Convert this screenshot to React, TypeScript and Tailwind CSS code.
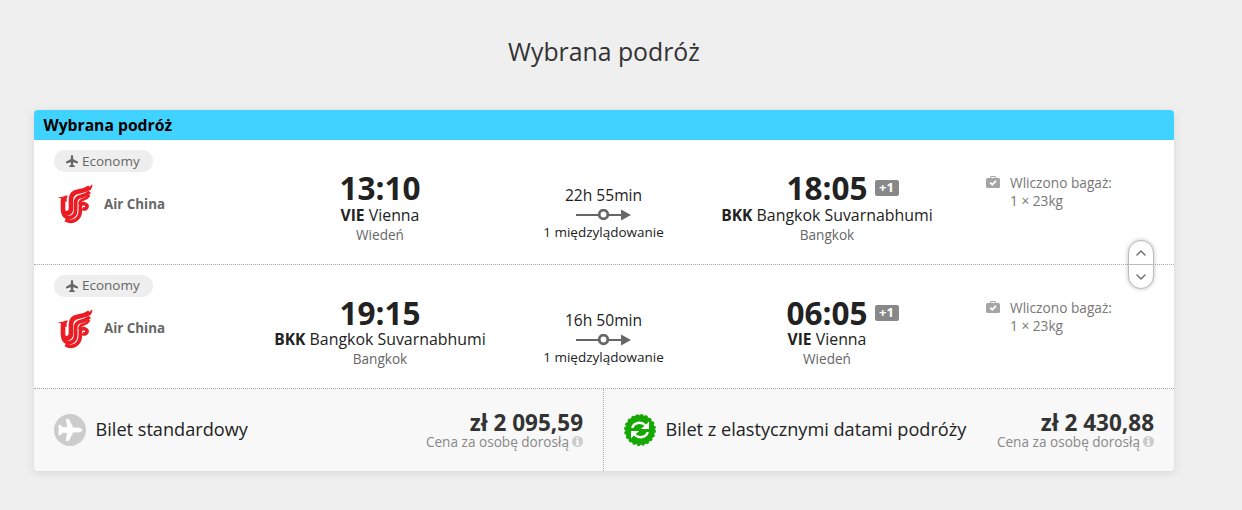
import { ChevronDown, ChevronUp } from 'lucide-react'

type Stop = { time: string; code: string; airport: string; city: string; nextDay?: boolean }

const legs: { from: Stop; to: Stop; duration: string }[] = [
  {
    from: { time: '13:10', code: 'VIE', airport: 'Vienna', city: 'Wiedeń' },
    to: { time: '18:05', code: 'BKK', airport: 'Bangkok Suvarnabhumi', city: 'Bangkok', nextDay: true },
    duration: '22h 55min',
  },
  {
    from: { time: '19:15', code: 'BKK', airport: 'Bangkok Suvarnabhumi', city: 'Bangkok' },
    to: { time: '06:05', code: 'VIE', airport: 'Vienna', city: 'Wiedeń', nextDay: true },
    duration: '16h 50min',
  },
]

const AirChinaLogo = () => (
  <svg viewBox="0 0 108 120" className="h-10 w-9" fill="none" stroke="#ec1c24">
    <path d="M2 42Q10 38 18 38Q26 34 33 35L29 42V54L12 48V43Z" fill="#ec1c24" stroke="none" />
    <path d="M18 47V76Q19 89 31 88Q42 86 42 73V45Q43 26 64 23Q84 20 98 10" strokeWidth="14" />
    <path d="M88 12Q100 9 106 1Q107 12 98 20Z" fill="#ec1c24" stroke="none" />
    <path d="M17 80Q20 102 37 101Q56 98 56 78V56Q56 40 72 37Q88 34 98 23" strokeWidth="11" />
    <path d="M25 107Q42 117 57 107Q70 98 70 79V68Q71 57 82 59Q93 62 89 71Q85 78 77 73" strokeWidth="11" />
    <path d="M67 62Q68 48 80 46Q91 43 97 33" strokeWidth="8" />
  </svg>
)

const PlaneUp = ({ className }: { className?: string }) => (
  <svg viewBox="0 0 12 12" className={className} fill="currentColor">
    <path d="M6 0C6.8 0 7.1.8 7.1 1.6V4L12 6.8V8.4L7.1 7.3V9.8L8.8 11V12H3.2V11L4.9 9.8V7.3L0 8.4V6.8L4.9 4V1.6C4.9.8 5.2 0 6 0Z" />
  </svg>
)

const RouteArrow = () => (
  <svg viewBox="0 0 56 12" className="h-3 w-14" fill="none" stroke="#666">
    <path d="M0 6H46" strokeWidth="2" />
    <path d="M45 .5L55 6L45 11.5Z" fill="#666" stroke="none" />
    <circle cx="27.5" cy="5.5" r="4.3" fill="#fff" strokeWidth="2.8" />
  </svg>
)

const Luggage = () => (
  <svg viewBox="0 0 14 12" className="mt-[2px] h-3 w-3.5" fill="none">
    <path d="M4.5 2.5V1Q4.5.5 5 .5H9Q9.5.5 9.5 1V2.5" stroke="#a5a5a5" />
    <rect y="2" width="14" height="10" rx="1.5" fill="#a5a5a5" />
    <path d="M4.2 6.6L6.3 8.7L10 4.8" stroke="#fff" strokeWidth="1.7" />
  </svg>
)

const StandardIcon = () => (
  <svg viewBox="0 0 32 32" className="size-8">
    <circle cx="16" cy="16" r="16" fill="#ccc" />
    <path
      d="M28 16C28 17.2 26 18 24 18H19L14.7 26.6H12.2L13.6 18.6H8.5L6.5 20.8H4.8L5.2 16L4.8 11.2H6.5L8.5 13.4H13.6L12.2 5.4H14.7L19 14H24C26 14 28 14.8 28 16Z"
      fill="#fff"
      stroke="#fff"
      strokeWidth=".8"
      strokeLinejoin="round"
    />
  </svg>
)

const FlexIcon = () => (
  <svg viewBox="0 0 32 32" className="size-8">
    <circle cx="16" cy="16" r="14.9" fill="#14a800" />
    <circle cx="16" cy="16" r="15.1" fill="none" stroke="#14a800" strokeWidth="1.6" strokeDasharray="2.74 2" />
    <path d="M8.2 13.8C10 8.4 17 7.2 21.5 11.4" fill="none" stroke="#fff" strokeWidth="2.5" />
    <path d="M25 7.6V14.9H16.8L19.7 12.6L22.4 10.3Z" fill="#fff" />
    <path d="M23.8 18.2C22 23.6 15 24.8 10.5 20.6" fill="none" stroke="#fff" strokeWidth="2.5" />
    <path d="M7 24.4V17.1H15.2L12.3 19.4L9.6 21.7Z" fill="#fff" />
  </svg>
)

const Info = () => (
  <svg viewBox="0 0 11 11" className="size-[11px]">
    <circle cx="5.5" cy="5.5" r="5.5" fill="#ccc" />
    <path d="M4.6 1.6H6.5V3.2H4.6ZM3.9 4.2H6.5V8H7.3V9.2H3.8V8H4.6V5.4H3.9Z" fill="#fff" />
  </svg>
)

const StopInfo = ({ stop }: { stop: Stop }) => (
  <div className="flex flex-col items-center pt-[31px] whitespace-nowrap text-[#222]">
    <div className="relative text-[31.5px] leading-[33.5px] font-bold">
      {stop.time}
      {stop.nextDay && (
        <span className="absolute top-[9px] left-full ml-[7px] h-4 w-6 rounded-[2px] bg-[#888] text-center text-[13px] leading-[15px] text-white">
          +1
        </span>
      )}
    </div>
    <div className="text-[15.9px] leading-5">
      <span className="text-[15.6px] font-bold">{stop.code}</span> {stop.airport}
    </div>
    <div className="text-[13.6px] leading-5 text-[#666]">{stop.city}</div>
  </div>
)

const Leg = ({ leg }: { leg: (typeof legs)[number] }) => (
  <div className="grid h-[124.5px] grid-cols-[234px_224px_223px_224px_1fr] border-b border-dotted border-[#aaa]">
    <div className="pt-2.5 pl-5 text-[#666]">
      <div className="flex h-[22px] w-[99px] items-center rounded-full bg-[#eee] pl-3 text-[13.5px]">
        <PlaneUp className="mr-1 size-3" />
        Economy
      </div>
      <div className="mt-3 flex items-center pl-[3px]">
        <AirChinaLogo />
        <span className="ml-[11px] text-[13.35px] font-bold">Air China</span>
      </div>
    </div>
    <StopInfo stop={leg.from} />
    <div className="flex flex-col items-center pt-[45px] text-[#222]">
      <div className="text-[15.6px] leading-5">{leg.duration}</div>
      <div className="mt-[4px]">
        <RouteArrow />
      </div>
      <div className="mt-[2px] text-[13.5px] leading-[18px]">1 międzylądowanie</div>
    </div>
    <StopInfo stop={leg.to} />
    <div className="flex gap-2.5 pt-[34px] pl-[47px] text-[13.7px] leading-[18px] text-[#777]">
      <Luggage />
      <div>
        Wliczono bagaż:
        <br />1 × 23kg
      </div>
    </div>
  </div>
)

const Ticket = ({ icon, name, price }: { icon: React.ReactNode; name: string; price: string }) => (
  <div className="flex items-center pr-5 pl-5">
    {icon}
    <span className="ml-[9.5px] text-[18.15px] text-[#222]">{name}</span>
    <div className="ml-auto text-right">
      <div className="text-[22.5px] leading-[23px] font-bold text-[#333]">{price}</div>
      <div className="flex items-center justify-end gap-[3px] text-[13.6px] leading-4 text-[#888]">
        Cena za osobę dorosłą
        <Info />
      </div>
    </div>
  </div>
)

export default function App() {
  return (
    <main className="h-[510px] bg-[#efefef] pl-[34px] font-['Open_Sans',sans-serif]">
      <h1 className="h-[110px] w-[1140px] pt-[33px] text-center text-[24.8px] leading-9 text-[#333]">Wybrana podróż</h1>
      <section className="relative w-[1140px] rounded-[4px] bg-white shadow-[0_2px_10px_rgba(0,0,0,0.1)]">
        <h2 className="h-[30px] rounded-t-[4px] bg-[#41d3ff] pl-[9.5px] text-[15.7px] leading-[30px] font-bold text-black">
          Wybrana podróż
        </h2>
        {legs.map((leg) => (
          <Leg key={leg.duration} leg={leg} />
        ))}
        <div className="grid h-[82px] grid-cols-[569px_1px_1fr] rounded-b-[4px] bg-[#f8f8f8]">
          <Ticket icon={<StandardIcon />} name="Bilet standardowy" price="zł 2 095,59" />
          <div className="border-l border-dotted border-[#aaa]" />
          <Ticket icon={<FlexIcon />} name="Bilet z elastycznymi datami podróży" price="zł 2 430,88" />
        </div>

        {/* Swap legs */}
        <div className="absolute top-[130px] right-5 flex h-[49px] w-[26px] flex-col rounded-full border border-[#bbb] bg-white text-[#666] shadow-[0_0_4px_rgba(0,0,0,0.25)]">
          <button className="flex h-6 items-center justify-center border-b border-[#bbb]">
            <ChevronUp className="size-4" />
          </button>
          <button className="flex flex-1 items-center justify-center">
            <ChevronDown className="size-4" />
          </button>
        </div>
      </section>
    </main>
  )
}
